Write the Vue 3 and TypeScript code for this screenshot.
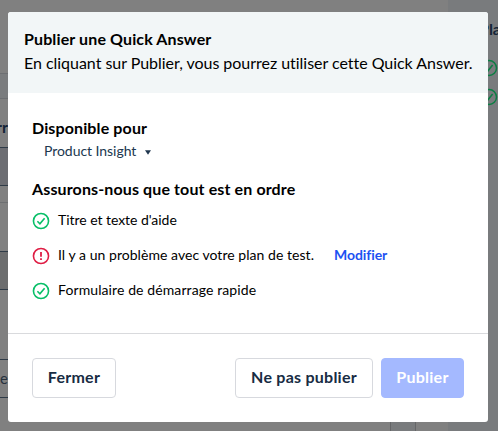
<script setup lang="ts">
interface Check {
  label: string
  ok: boolean
  action?: string
  key: string
}

const checks: Check[] = [
  { key: 'title', label: "Titre et texte d'aide", ok: true },
  { key: 'plan', label: 'Il y a un problème avec votre plan de test.', ok: false, action: 'Modifier' },
  { key: 'form', label: 'Formulaire de démarrage rapide', ok: true },
]
</script>

<template>
  <div class="screen">
    <div class="page">
      <main class="editor">
        <div class="band"></div>
        <div class="field-label">rr</div>
        <div class="field filled"></div>
        <div class="rule"></div>
        <div class="field muted"></div>
        <div class="field entry">e</div>
      </main>
      <div class="scroll"></div>
      <div class="gutter"></div>
      <aside class="sidebar">
        <div class="side-title">Pla</div>
        <svg v-for="n in 2" :key="n" class="side-icon" viewBox="0 0 18 18">
          <circle cx="9" cy="9" r="7.5" />
          <path d="M5.5 9.4 8 11.8 12.6 6" />
        </svg>
      </aside>
    </div>

    <section class="modal" role="dialog">
      <header class="head">
        <h1>Publier une Quick Answer</h1>
        <p>En cliquant sur Publier, vous pourrez utiliser cette Quick Answer.</p>
      </header>
      <div class="body">
        <h2 class="available">Disponible pour</h2>
        <div class="select">
          <span>Product Insight</span>
          <svg class="caret" viewBox="0 0 6 5"><path d="M0 .2h6L3 4.8z" /></svg>
        </div>
        <h2 class="ready">Assurons-nous que tout est en ordre</h2>
        <ul>
          <li v-for="check in checks" :key="check.key">
            <svg class="status" :class="{ bad: !check.ok }" viewBox="0 0 18 18">
              <circle cx="9" cy="9" r="7.55" />
              <path v-if="check.ok" d="M5.4 9.3 7.9 11.8 12.6 6.2" />
              <template v-else>
                <path class="bar" d="M9 5v4.7" />
                <path class="bar" d="M9 11.3v1.7" />
              </template>
            </svg>
            <span :class="check.key">{{ check.label }}</span>
            <a v-if="check.action">{{ check.action }}</a>
          </li>
        </ul>
      </div>
      <footer class="foot">
        <button class="close">Fermer</button>
        <button class="skip">Ne pas publier</button>
        <button class="publish" disabled>Publier</button>
      </footer>
    </section>
  </div>
</template>

<style>
body {
  margin: 0;
  overflow: hidden;
}
</style>

<style scoped>
* {
  box-sizing: border-box;
}
.screen {
  position: relative;
  width: 498px;
  height: 431px;
  overflow: hidden;
  background: #808080;
  font-family: Lato, "Liberation Sans", sans-serif;
  color: #000;
}
.page {
  display: grid;
  grid-template-columns: 390px 26px 32px 50px;
  height: 431px;
  color: #142436;
}
.editor {
  padding-top: 73px;
}
.band {
  height: 26px;
  background: #7a7c7e;
  border: solid #6d6f72;
  border-width: 1px 0;
}
.field-label {
  height: 48px;
  padding-top: 18px;
  margin-left: -4px;
  font-size: 16px;
  line-height: 20px;
  font-weight: 700;
}
.field {
  height: 39px;
  border: solid #2f3b47;
  border-width: 1px 0;
}
.filled {
  background: #6c6d72;
}
.rule {
  margin-top: 16px;
  height: 1px;
  background: #6d6f71;
}
.muted {
  margin-top: 48px;
  background: #6c6d6e;
}
.entry {
  margin-top: 69px;
  height: 39px;
  font-size: 15px;
  line-height: 36px;
  color: #27323e;
}
.scroll {
  align-self: end;
  height: 40px;
  background: #797b7d;
  border: solid #656668;
  border-width: 0 1px;
}
.sidebar {
  display: flex;
  flex-direction: column;
  align-items: flex-start;
  background: #797b7d;
  padding: 18px 0 0 32px;
}
.side-title {
  font-size: 16px;
  line-height: 22px;
  font-weight: 700;
  margin: 0 0 19px -1px;
}
.side-icon {
  width: 18px;
  height: 18px;
  margin-bottom: 11px;
  flex: none;
  fill: none;
  stroke: #0b7e43;
  stroke-width: 1.5;
}
.modal {
  position: absolute;
  left: 8px;
  top: 12px;
  width: 480px;
  height: 410px;
  display: flex;
  flex-direction: column;
  background: #fff;
  border-radius: 3px;
  overflow: hidden;
  white-space: nowrap;
}
.head {
  height: 81px;
  padding: 15px 16px 0;
  background: #f2f6f7;
}
h1,
h2,
p,
ul {
  margin: 0;
  padding: 0;
}
h1,
h2,
p {
  font-size: 16px;
  line-height: 24px;
}
h1,
h2 {
  font-weight: 700;
  letter-spacing: 0.125px;
}
p {
  letter-spacing: -0.03px;
}
.body {
  height: 240px;
  padding: 23px 24px 0;
}
.select {
  display: flex;
  align-items: center;
  height: 21px;
  padding-left: 12px;
  font-size: 14px;
  letter-spacing: -0.05px;
  color: #20374f;
}
.caret {
  width: 6px;
  height: 5px;
  margin: 3px 0 0 9px;
  fill: #20374f;
}
.ready {
  margin-top: 16px;
}
ul {
  margin-top: 1px;
}
li {
  display: flex;
  align-items: center;
  height: 35px;
  font-size: 14px;
}
.status {
  width: 18px;
  height: 18px;
  margin: 3px 8px 0 0;
  fill: none;
  stroke: #08bf68;
  stroke-width: 1.6;
}
.bad {
  stroke: #df1e45;
}
.bar {
  stroke-width: 1.8;
}
.title {
  letter-spacing: -0.04px;
}
.plan {
  letter-spacing: 0.045px;
}
.form {
  letter-spacing: 0.1px;
}
a {
  margin-left: 20px;
  color: #1c51f2;
  font-weight: 700;
  letter-spacing: -0.08px;
}
.foot {
  display: flex;
  flex: 1;
  align-items: flex-start;
  border-top: 1px solid #d9dadd;
  padding: 24px 24px 0;
}
button {
  height: 40px;
  padding: 0 0 2px;
  border: 1px solid #d7d9de;
  border-radius: 4px;
  background: #fff;
  color: #182c43;
  font: 700 16px/36px Lato, "Liberation Sans", sans-serif;
  letter-spacing: 0.25px;
}
.close {
  width: 84px;
}
.skip {
  width: 138px;
  margin-left: auto;
}
.publish {
  width: 83px;
  margin-left: 8px;
  border-color: #a4b9ff;
  background: #a4b9ff;
  color: #fff;
}
</style>
